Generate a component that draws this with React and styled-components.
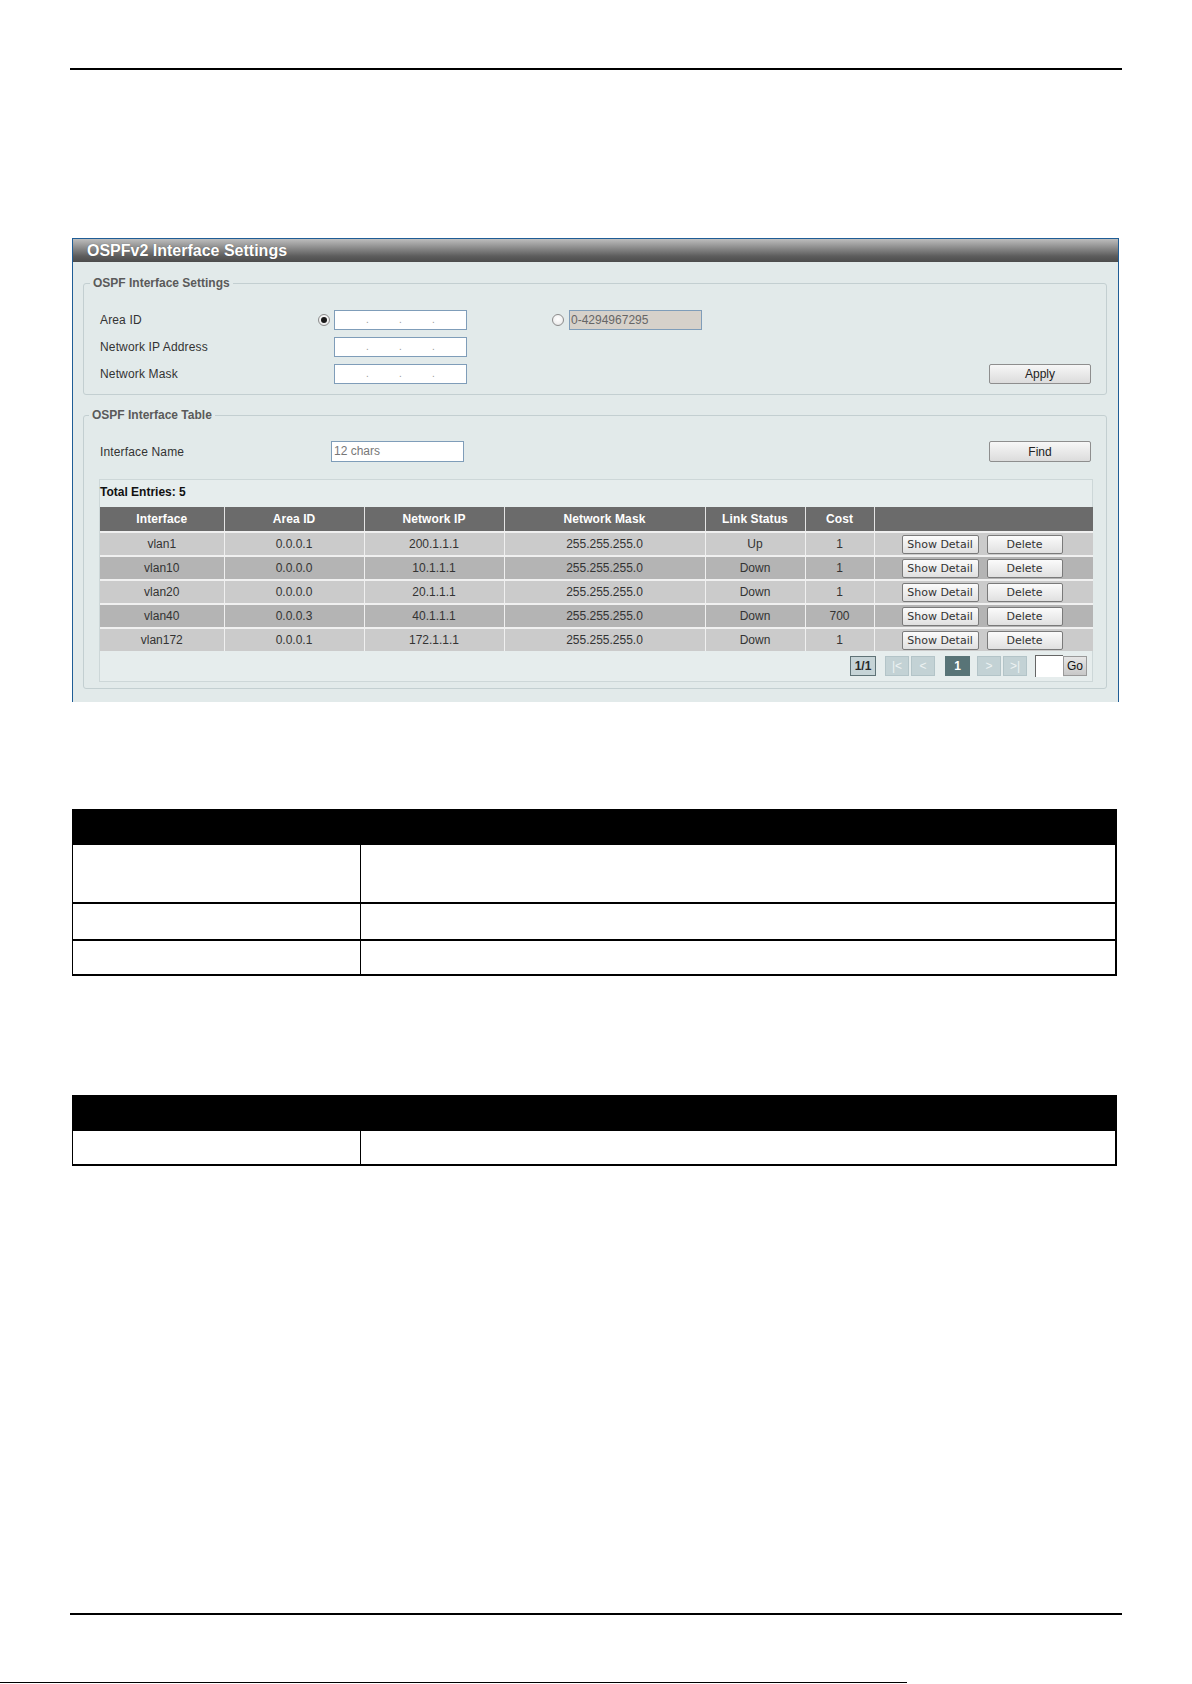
import React from 'react'
import styled, { createGlobalStyle } from 'styled-components'

const interfaces = [
  { name: 'vlan1', area: '0.0.0.1', ip: '200.1.1.1', mask: '255.255.255.0', status: 'Up', cost: '1' },
  { name: 'vlan10', area: '0.0.0.0', ip: '10.1.1.1', mask: '255.255.255.0', status: 'Down', cost: '1' },
  { name: 'vlan20', area: '0.0.0.0', ip: '20.1.1.1', mask: '255.255.255.0', status: 'Down', cost: '1' },
  { name: 'vlan40', area: '0.0.0.3', ip: '40.1.1.1', mask: '255.255.255.0', status: 'Down', cost: '700' },
  { name: 'vlan172', area: '0.0.0.1', ip: '172.1.1.1', mask: '255.255.255.0', status: 'Down', cost: '1' },
]

const columns = [
  { title: 'Interface', width: 124 },
  { title: 'Area ID', width: 140 },
  { title: 'Network IP', width: 140 },
  { title: 'Network Mask', width: 201 },
  { title: 'Link Status', width: 100 },
  { title: 'Cost', width: 69 },
  { title: '', width: 219 },
]

const IpField = () => (
  <IpBox>
    <Dot>.</Dot>
    <Dot>.</Dot>
    <Dot>.</Dot>
  </IpBox>
)

const App = () => {
  return (
    <>
      <GlobalStyle />
      <Page>
        <Sheet>
          <Rule />

          <Panel>
            <PanelTitle>OSPFv2 Interface Settings</PanelTitle>

            <Group>
              <Legend>OSPF Interface Settings</Legend>
              <Rows>
                <Row>
                  <Label>Area ID</Label>
                  <RadioSlot>
                    <Radio $checked />
                  </RadioSlot>
                  <IpField />
                  <AltChoice>
                    <Radio />
                    <AltInput>0-4294967295</AltInput>
                  </AltChoice>
                </Row>
                <Row>
                  <Label>Network IP Address</Label>
                  <RadioSlot />
                  <IpField />
                </Row>
                <Row>
                  <Label>Network Mask</Label>
                  <RadioSlot />
                  <IpField />
                  <Button>Apply</Button>
                </Row>
              </Rows>
            </Group>

            <Group $table>
              <Legend>OSPF Interface Table</Legend>
              <NameRow>
                <NameLabel>Interface Name</NameLabel>
                <NameInput>12 chars</NameInput>
                <Button $find>Find</Button>
              </NameRow>

              <TableBox>
                <Total>Total Entries: 5</Total>
                <Grid>
                  <colgroup>
                    {columns.map((c, i) => (
                      <col key={i} style={{ width: c.width }} />
                    ))}
                  </colgroup>
                  <thead>
                    <tr>
                      {columns.map((c, i) => (
                        <Th key={i}>{c.title}</Th>
                      ))}
                    </tr>
                  </thead>
                  <tbody>
                    {interfaces.map((r, i) => (
                      <Tr key={r.name} $dark={i % 2 === 1}>
                        <Td>{r.name}</Td>
                        <Td>{r.area}</Td>
                        <Td>{r.ip}</Td>
                        <Td>{r.mask}</Td>
                        <Td>{r.status}</Td>
                        <Td>{r.cost}</Td>
                        <ActionCell>
                          <SmallButton $w={77}>Show Detail</SmallButton>
                          <SmallButton $w={76}>Delete</SmallButton>
                        </ActionCell>
                      </Tr>
                    ))}
                  </tbody>
                </Grid>
                <Pager>
                  <PageInfo>1/1</PageInfo>
                  <PageNav>|&lt;</PageNav>
                  <PageNav $gap={10}>&lt;</PageNav>
                  <PageCurrent>1</PageCurrent>
                  <PageNav>&gt;</PageNav>
                  <PageNav $gap={8}>&gt;|</PageNav>
                  <PageInput />
                  <GoButton>Go</GoButton>
                </Pager>
              </TableBox>
            </Group>
          </Panel>

          <DocTable $top={107}>
            <tbody>
              <tr>
                <DocHead />
                <DocHead />
              </tr>
              <tr>
                <DocKey $h={59} />
                <DocCell />
              </tr>
              <tr>
                <DocKey $h={37} />
                <DocCell />
              </tr>
              <tr>
                <DocKey $h={35} />
                <DocCell />
              </tr>
            </tbody>
          </DocTable>

          <DocTable $top={119}>
            <tbody>
              <tr>
                <DocHead />
                <DocHead />
              </tr>
              <tr>
                <DocKey $h={35} />
                <DocCell />
              </tr>
            </tbody>
          </DocTable>

          <Rule $bottom />
        </Sheet>
        <FootLine />
      </Page>
    </>
  )
}

export default App

const GlobalStyle = createGlobalStyle`
  html, body {
    margin: 0;
    padding: 0;
    background: #fff;
  }
  body {
    font-family: "Liberation Sans", Arial, sans-serif;
  }
`

const Page = styled.div`
  width: 1192px;
  height: 1684px;
  display: flex;
  flex-direction: column;
  overflow: hidden;
`

const Sheet = styled.div`
  flex: 1;
  display: flex;
  flex-direction: column;
  padding: 0 70px;
`

const Rule = styled.div`
  height: 2px;
  background: #000;
  margin-top: ${(p) => (p.$bottom ? 'auto' : '68px')};
  margin-bottom: ${(p) => (p.$bottom ? '67px' : '0')};
`

const FootLine = styled.div`
  width: 907px;
  height: 1px;
  background: #000;
  margin-bottom: 1px;
`

const Panel = styled.div`
  margin: 168px 3px 0 2px;
  border: 1px solid #1f5d96;
  border-bottom: none;
  background: #e2eaea;
  padding-bottom: 13px;
`

const PanelTitle = styled.div`
  height: 23px;
  line-height: 23px;
  padding-left: 14px;
  background: linear-gradient(#bdbdbd 0%, #909090 35%, #5c5c5c 75%, #4c4c4c 100%);
  color: #fff;
  font-size: 16px;
  font-weight: bold;
  text-shadow: 0 0 1px rgba(0, 0, 0, 0.4);
`

const Group = styled.fieldset`
  margin: ${(p) => (p.$table ? '13px 11px 0 10px' : '14px 11px 0 10px')};
  padding: ${(p) => (p.$table ? '19px 13px 6px 15px' : '20px 15px 10px 16px')};
  border: 1px solid #c3cfd1;
  border-radius: 3px;
  min-width: 0;
`

const Legend = styled.legend`
  margin-left: -10px;
  padding: 0 3px;
  font-size: 12px;
  line-height: 14px;
  font-weight: bold;
  color: #5a5a5a;
`

const Rows = styled.div`
  display: flex;
  flex-direction: column;
  gap: 7px;
`

const Row = styled.div`
  display: flex;
  align-items: center;
  height: 20px;
`

const Label = styled.div`
  width: 218px;
  flex: none;
  font-size: 12px;
  letter-spacing: 0.15px;
  color: #333;
`

const RadioSlot = styled.div`
  width: 16px;
  flex: none;
  display: flex;
  align-items: center;
`

const Radio = styled.span`
  width: 12px;
  height: 12px;
  box-sizing: border-box;
  border: 1px solid #8c8c8c;
  border-radius: 50%;
  background: radial-gradient(circle at 50% 40%, #ffffff 0%, #f2f2f2 55%, #d8d8d8 100%);
  display: flex;
  align-items: center;
  justify-content: center;

  &::after {
    content: '';
    display: ${(p) => (p.$checked ? 'block' : 'none')};
    width: 6px;
    height: 6px;
    border-radius: 50%;
    background: #1a1a1a;
  }
`

const IpBox = styled.div`
  width: 133px;
  height: 20px;
  flex: none;
  box-sizing: border-box;
  border: 1px solid #7f9db9;
  background: #fff;
  display: flex;
  align-items: center;
  padding-left: 31px;
  gap: 30px;
`

const Dot = styled.span`
  width: 3px;
  font-size: 10px;
  color: #9a9a9a;
  line-height: 10px;
`

const AltChoice = styled.div`
  display: flex;
  align-items: center;
  gap: 5px;
  margin-left: 85px;
`

const AltInput = styled.div`
  width: 133px;
  height: 20px;
  box-sizing: border-box;
  border: 1px solid #7f9db9;
  background: #d6d1ca;
  color: #666;
  font-size: 12px;
  line-height: 18px;
  padding-left: 1px;
`

const Button = styled.button`
  margin-left: auto;
  margin-right: ${(p) => (p.$find ? '2px' : '0')};
  width: 102px;
  height: ${(p) => (p.$find ? '21px' : '20px')};
  padding: 0;
  border: 1px solid #8e8e8e;
  border-radius: 2px;
  background: linear-gradient(#f7f7f7, #dcdcdc);
  font-family: "Liberation Sans", Arial, sans-serif;
  font-size: 12px;
  color: #222;
`

const NameRow = styled.div`
  display: flex;
  align-items: center;
  height: 21px;
`

const NameLabel = styled.div`
  width: 231px;
  padding-left: 1px;
  flex: none;
  font-size: 12px;
  letter-spacing: 0.15px;
  color: #333;
`

const NameInput = styled.div`
  width: 133px;
  height: 21px;
  box-sizing: border-box;
  border: 1px solid #7f9db9;
  background: #fff;
  color: #777;
  font-size: 12px;
  line-height: 19px;
  padding-left: 2px;
`

const TableBox = styled.div`
  margin-top: 17px;
  border: 1px solid #cdd7d8;
  background: #e6eded;
`

const Total = styled.div`
  padding: 5px 0 8px;
  font-size: 12px;
  line-height: 14px;
  font-weight: bold;
  color: #111;
`

const Grid = styled.table`
  width: 100%;
  table-layout: fixed;
  border-collapse: collapse;
  font-size: 12px;
`

const Th = styled.th`
  height: 24px;
  padding: 0;
  background: #6b6b6b;
  color: #fff;
  font-weight: bold;
  letter-spacing: 0.1px;
  border-right: 1px solid #e4e4e4;

  &:last-child {
    border-right: none;
  }
`

const Tr = styled.tr`
  background: ${(p) => (p.$dark ? '#b4b4b4' : '#cbcbcb')};
`

const Td = styled.td`
  height: 22px;
  padding: 0;
  text-align: center;
  color: #333;
  border-top: 2px solid #f0f0f0;
  border-right: 1px solid #f0f0f0;
`

const ActionCell = styled(Td)`
  text-align: left;
  padding-left: 27px;
  border-right: none;
  white-space: nowrap;
`

const SmallButton = styled.button`
  width: ${(p) => p.$w}px;
  height: 19px;
  margin-right: 8px;
  padding: 0;
  vertical-align: middle;
  border: 1px solid #7a7a7a;
  border-radius: 2px;
  background: linear-gradient(#fbfbfb, #e0e0e0);
  font-family: "DejaVu Sans", Verdana, sans-serif;
  font-size: 11px;
  color: #333;
`

const Pager = styled.div`
  height: 30px;
  display: flex;
  align-items: center;
  justify-content: flex-end;
  padding-right: 5px;
`

const PageBox = styled.div`
  height: 20px;
  box-sizing: border-box;
  display: flex;
  align-items: center;
  justify-content: center;
  font-size: 12px;
`

const PageInfo = styled(PageBox)`
  width: 26px;
  margin-right: 9px;
  border: 1px solid #5f7377;
  background: #c6d4d7;
  color: #2a2a2a;
  font-weight: bold;
`

const PageNav = styled(PageBox)`
  width: 24px;
  margin-right: ${(p) => p.$gap ?? 2}px;
  border: 1px solid #b3c4c8;
  background: #c3d2d5;
  color: #eef3f3;
`

const PageCurrent = styled(PageBox)`
  width: 25px;
  margin-right: 7px;
  background: #587477;
  color: #fff;
  font-weight: bold;
`

const PageInput = styled.div`
  width: 28px;
  height: 22px;
  box-sizing: border-box;
  border-top: 1px solid #666;
  border-left: 1px solid #666;
  background: #fff;
`

const GoButton = styled(PageBox)`
  width: 24px;
  border: 1px solid #9a9a9a;
  background: linear-gradient(#e6e6e6, #c8c8c8);
  color: #111;
`

const DocTable = styled.table`
  margin: ${(p) => p.$top}px 5px 0 2px;
  border-collapse: collapse;
  border-left: 1px solid #000;
  border-right: 2px solid #000;
`

const DocHead = styled.td`
  height: 36px;
  padding: 0;
  background: #000;
`

const DocKey = styled.td`
  width: 287px;
  height: ${(p) => p.$h - 2}px;
  padding: 0;
  border-bottom: 2px solid #000;
  border-right: 1px solid #000;
`

const DocCell = styled.td`
  padding: 0;
  border-bottom: 2px solid #000;
`
